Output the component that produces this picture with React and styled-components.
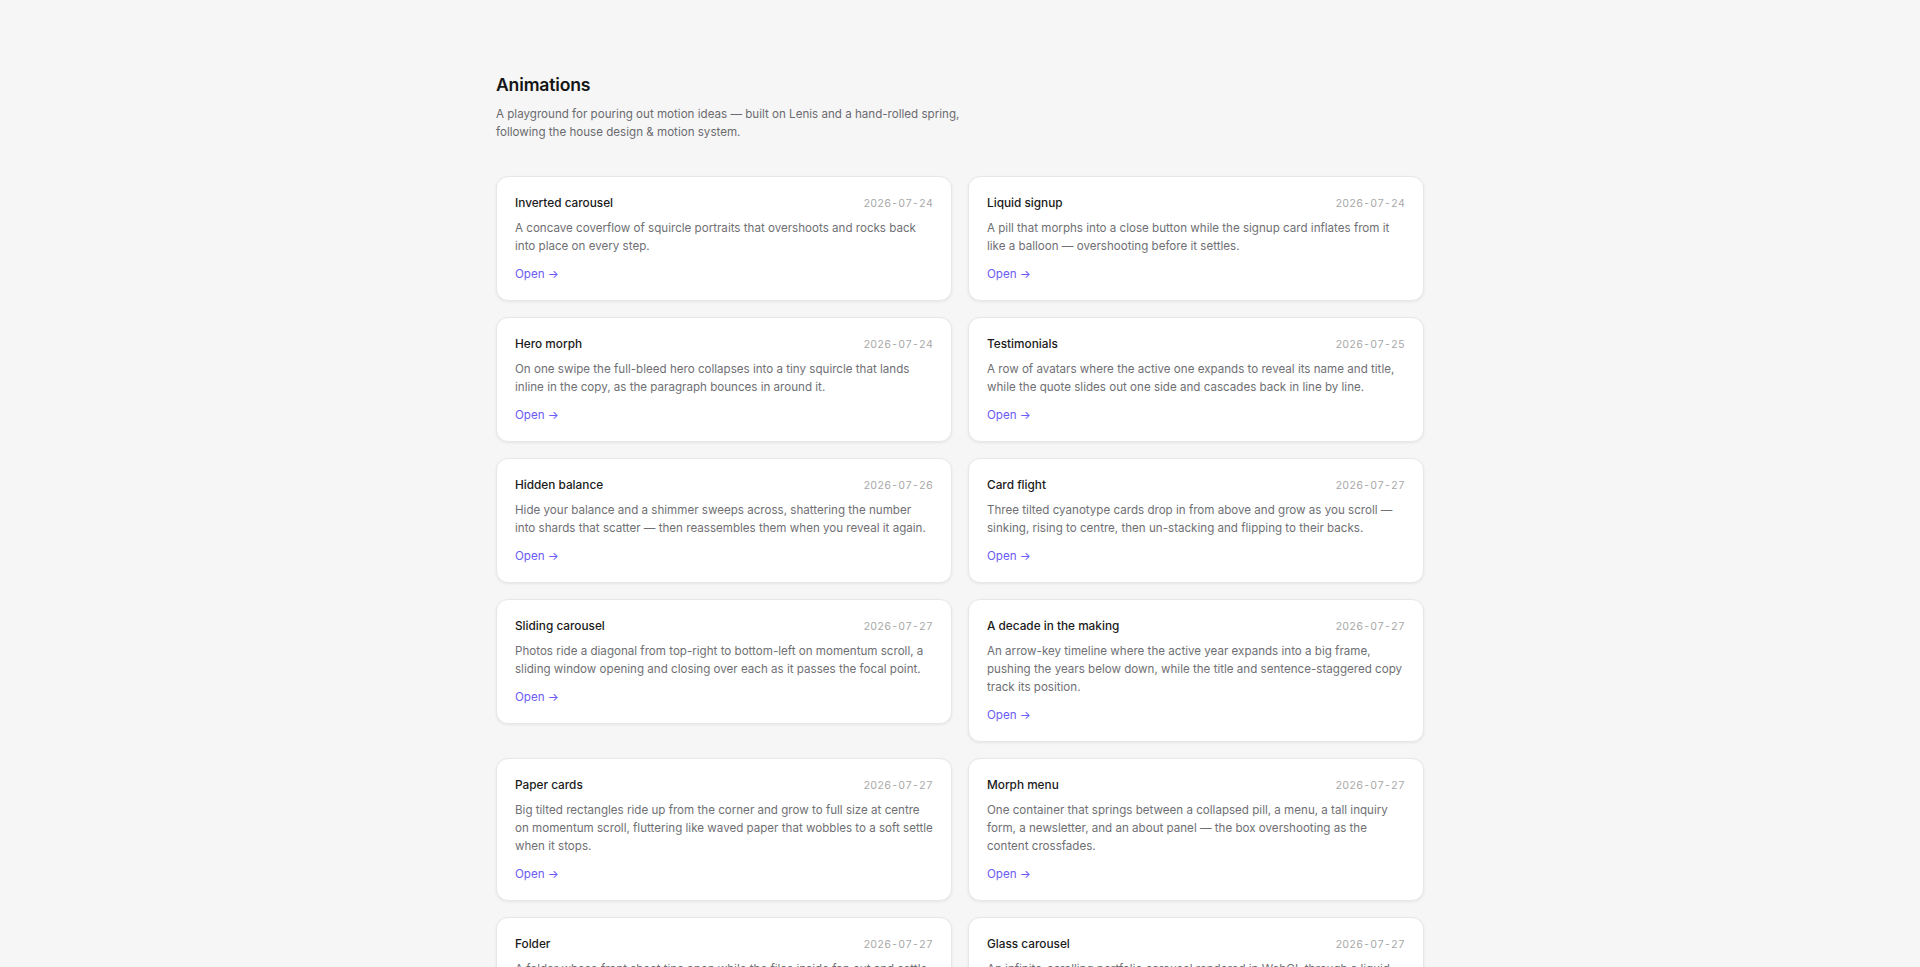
import React from "react";
import styled, { createGlobalStyle } from "styled-components";

const animations = [
  {
    title: "Inverted carousel",
    date: "2026-07-24",
    text: "A concave coverflow of squircle portraits that overshoots and rocks back into place on every step.",
  },
  {
    title: "Liquid signup",
    date: "2026-07-24",
    text: "A pill that morphs into a close button while the signup card inflates from it like a balloon — overshooting before it settles.",
  },
  {
    title: "Hero morph",
    date: "2026-07-24",
    text: "On one swipe the full-bleed hero collapses into a tiny squircle that lands inline in the copy, as the paragraph bounces in around it.",
  },
  {
    title: "Testimonials",
    date: "2026-07-25",
    text: "A row of avatars where the active one expands to reveal its name and title, while the quote slides out one side and cascades back in line by line.",
  },
  {
    title: "Hidden balance",
    date: "2026-07-26",
    text: "Hide your balance and a shimmer sweeps across, shattering the number into shards that scatter — then reassembles them when you reveal it again.",
  },
  {
    title: "Card flight",
    date: "2026-07-27",
    text: "Three tilted cyanotype cards drop in from above and grow as you scroll — sinking, rising to centre, then un-stacking and flipping to their backs.",
  },
  {
    title: "Sliding carousel",
    date: "2026-07-27",
    text: "Photos ride a diagonal from top-right to bottom-left on momentum scroll, a sliding window opening and closing over each as it passes the focal point.",
  },
  {
    title: "A decade in the making",
    date: "2026-07-27",
    text: "An arrow-key timeline where the active year expands into a big frame, pushing the years below down, while the title and sentence-staggered copy track its position.",
  },
  {
    title: "Paper cards",
    date: "2026-07-27",
    text: "Big tilted rectangles ride up from the corner and grow to full size at centre on momentum scroll, fluttering like waved paper that wobbles to a soft settle when it stops.",
  },
  {
    title: "Morph menu",
    date: "2026-07-27",
    text: "One container that springs between a collapsed pill, a menu, a tall inquiry form, a newsletter, and an about panel — the box overshooting as the content crossfades.",
  },
  {
    title: "Folder",
    date: "2026-07-27",
    text: "A folder whose front sheet tips open while the files inside fan out and settle back when it closes.",
  },
  {
    title: "Glass carousel",
    date: "2026-07-27",
    text: "An infinite-scrolling portfolio carousel rendered in WebGL through a liquid glass lens that bends each slide.",
  },
];

const App = () => {
  return (
    <>
      <GlobalStyle />
      <Page>
        <Header>
          <Heading>Animations</Heading>
          <Intro>
            A playground for pouring out motion ideas — built on Lenis and a
            hand-rolled spring, following the house design &amp; motion system.
          </Intro>
        </Header>
        <Grid>
          {animations.map((item) => (
            <Card key={item.title}>
              <CardTop>
                <Title>{item.title}</Title>
                <Date>{item.date}</Date>
              </CardTop>
              <Text>{item.text}</Text>
              <OpenLink href="#">Open →</OpenLink>
            </Card>
          ))}
        </Grid>
      </Page>
    </>
  );
};

const GlobalStyle = createGlobalStyle`
  body {
    margin: 0;
    background: #f6f6f6;
    font-family: Inter, "Noto Sans", sans-serif;
    -webkit-font-smoothing: antialiased;
  }
`;
const Page = styled.main`
  width: 928px;
  margin: 0 auto;
  padding: 73px 0 80px;
`;
const Header = styled.header`
  margin-bottom: 35px;
`;
const Heading = styled.h1`
  margin: 0;
  font-size: 17.6px;
  line-height: 24px;
  font-weight: 600;
  letter-spacing: -0.01em;
  color: #151515;
`;
const Intro = styled.p`
  margin: 8px 0 0;
  max-width: 480px;
  font-size: 11.6px;
  line-height: 18px;
  color: #6b6b70;
`;
const Grid = styled.div`
  display: grid;
  grid-template-columns: 1fr 1fr;
  gap: 16px;
  align-items: start;
`;
const Card = styled.article`
  background: #fff;
  border: 1px solid #e7e7e7;
  border-radius: 12px;
  padding: 19px 18px 17px;
  box-shadow: 0 1px 3px rgba(0, 0, 0, 0.07);
`;
const CardTop = styled.div`
  display: flex;
  justify-content: space-between;
  align-items: baseline;
`;
const Title = styled.h2`
  margin: 0;
  font-size: 11.8px;
  font-weight: 500;
  color: #1a1a1a;
`;
const Date = styled.span`
  font-size: 10.5px;
  letter-spacing: 0.15px;
  font-variant-numeric: tabular-nums;
  color: #a8a8a8;
`;
const Text = styled.p`
  margin: 9px 0 0;
  font-size: 11.6px;
  line-height: 18px;
  color: #6f6f74;
`;
const OpenLink = styled.a`
  display: inline-block;
  margin-top: 10px;
  font-size: 11.6px;
  line-height: 18px;
  color: #6b5cf5;
  text-decoration: none;
`;

export default App;
